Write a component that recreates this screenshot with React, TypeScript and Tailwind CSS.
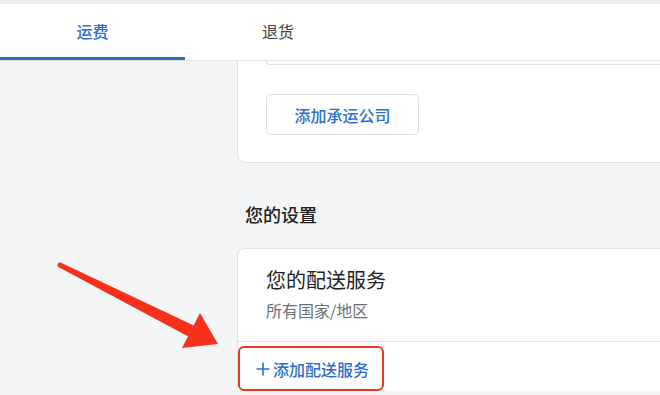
export default function App() {
  return (
    <div
      className="relative w-[660px] h-[395px] overflow-hidden bg-[#f4f5f6]"
      style={{ fontFamily: '"Noto Sans CJK SC", "Noto Sans", sans-serif' }}
    >
      {/* Top strip */}
      <div className="h-[4px] bg-[#ececec]" />

      {/* Tabs */}
      <div className="flex h-[57px] bg-white border-b border-[#e1e3e5]">
        <div className="relative w-[185px] flex items-center justify-center text-[16px] font-medium text-[#2c6ecb] pb-[2px]">
          运费
          <div className="absolute left-0 right-0 bottom-0 h-[3px] bg-[#2c6ecb]" />
        </div>
        <div className="w-[186px] flex items-center justify-center text-[16px] text-[#444] pb-[2px]">
          退货
        </div>
      </div>

      {/* Content */}
      <div className="pl-[237px]">
        {/* Carrier card */}
        <div className="bg-white border-l border-b border-[#e1e3e5] rounded-bl-[8px] pl-[28px] pb-[27px]">
          <div className="h-[4px] border-l border-b border-[#dcdfe3] rounded-bl-[8px]" />
          <button className="mt-[29px] w-[153px] h-[41px] rounded-[5px] border border-[#dcdfe3] bg-white text-[16px] font-medium text-[#2c6ecb]">
            添加承运公司
          </button>
        </div>

        {/* Settings heading */}
        <div className="pl-[8px] pt-[38px] h-[85px] text-[18px] font-medium text-[#222]">
          您的设置
        </div>

        {/* Delivery service card */}
        <div className="bg-white border-l border-t border-[#e1e3e5] rounded-tl-[8px]">
          <div className="pl-[28px] pt-[16px] pb-[16px] border-b border-[#e1e3e5]">
            <div className="text-[20px] leading-[30px] text-[#202223]">您的配送服务</div>
            <div className="text-[16px] leading-[30px] text-[#6d7175]">所有国家/地区</div>
          </div>
          <div className="pt-[4px]">
            <div className="w-[146px] h-[45px] border-[2px] border-[#e8391f] rounded-[6px] flex items-center pl-[16px] text-[16px] font-medium text-[#2c6ecb]">
              <svg width="14" height="14" viewBox="0 0 14 14" className="mr-[3px]">
                <path d="M7 0.5 V13.5 M0.5 7 H13.5" stroke="#2c6ecb" strokeWidth="1.6" />
              </svg>
              添加配送服务
            </div>
          </div>
        </div>
      </div>

      {/* Red arrow annotation */}
      <svg className="absolute left-0 top-0" width="660" height="395" viewBox="0 0 660 395">
        <path
          d="M61.1 262.8 L193.7 325.6 L188.3 336.4 L58.9 267.2 Z"
          fill="#f5301b"
        />
        <path d="M200 313 L218 344 L182 348 Z" fill="#f5301b" />
        <circle cx="60" cy="265" r="2.5" fill="#f5301b" />
      </svg>
    </div>
  )
}
